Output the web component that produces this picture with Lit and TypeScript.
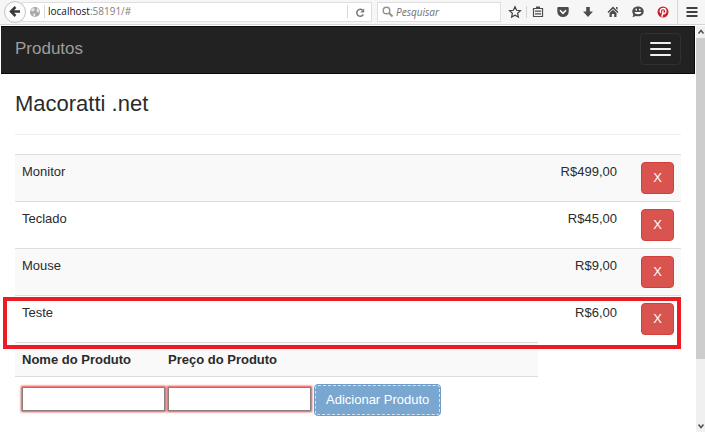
import { LitElement, html, css, svg } from "lit";
import { customElement, state } from "lit/decorators.js";
import { classMap } from "lit/directives/class-map.js";

interface Product {
  name: string;
  price: string;
  marked?: boolean;
}

const icons = {
  back: svg`<path d="M8.500 3 4 7.500 8.500 12M4.500 7.500H13" fill="none" stroke="#3a3a3a" stroke-width="2.500"/>`,
  globe: svg`<circle cx="8" cy="8" r="5" fill="#a6a6a6"/><path d="M3.800 6 6 4l2 1-1 2-2 .500zM6 9l2.500 1L8 12.500 6.500 12zM10 3.800l2.500 2.500-1 2.500-2-1z" fill="#e8e8e8"/>`,
  reload: svg`<path d="M10.800 5.300A3.500 3.500 0 1 0 11.300 9.500" fill="none" stroke="#7a7a7a" stroke-width="1.500"/><path d="M12.200 3.500v4H8.200z" fill="#7a7a7a"/>`,
  search: svg`<circle cx="6.500" cy="6.500" r="3.300" fill="none" stroke="#909090" stroke-width="1.400"/><path d="m9 9 3.500 3.500" stroke="#909090" stroke-width="2"/>`,
  star: svg`<path d="m8 2.800 1.600 3.500 3.800.4-2.800 2.600.8 3.800L8 11.200l-3.400 1.900.8-3.800-2.800-2.600 3.800-.4z" fill="none" stroke="#404040" stroke-width="1.200"/>`,
  list: svg`<path d="M3.500 4.500h9v8h-9z" fill="#f6f6f6" stroke="#4c4c4c" stroke-width="1.200"/><path d="M5 7.200h6M5 9.800h6" stroke="#4c4c4c" stroke-width="1.200"/><path d="M6 2.500h4V5H6z" fill="#4c4c4c"/>`,
  pocket: svg`<path d="M2.300 4a1 1 0 0 1 1-1h9.400a1 1 0 0 1 1 1v3.500a5.700 5.500 0 0 1-11.400 0z" fill="#4c4c4c"/><path d="m5 6.300 3 3 3-3" fill="none" stroke="#fff" stroke-width="1.600"/>`,
  download: svg`<path d="M6.200 3h3.600v4.500H13l-5 5.500-5-5.500h3.200z" fill="#4c4c4c"/>`,
  home: svg`<path d="M8 2.500 13.500 8l-1 1L8 4.800 3.500 9l-1-1zM11 3h1.500v3L11 4.500zM4.500 9 8 5.800 11.500 9v4H9.200v-3H6.800v3H4.500z" fill="#4c4c4c"/>`,
  chat: svg`<path d="M8 2.500c3.500 0 5.700 2.200 5.700 5S11.500 12.300 8 12.300c-.8 0-1.500 0-2.200-.3L2.500 13.200l.8-2.700A4.300 4.300 0 0 1 2.300 7.500C2.300 4.700 4.500 2.500 8 2.500z" fill="#4c4c4c"/><path d="M5.500 4.800H7v1.700H5.500zM9 4.800h1.500v1.700H9zM4.500 8h7c-.5 3-6.500 3-7 0z" fill="#fff"/>`,
  pinterest: svg`<circle cx="8" cy="8" r="5.500" fill="#cb2027"/><path d="M5.800 8.800C4.300 6.300 6 4.500 8.200 4.500c3.600 0 3.200 5.200.8 5.200-.8 0-1.300-.6-1.300-.6M8.200 6.500 6.900 12.800" fill="none" stroke="#fff" stroke-width="1.400"/>`,
  menu: svg`<path d="M2.500 4h11M2.500 8h11M2.500 12h11" stroke="#404040" stroke-width="2"/>`,
  up: svg`<path d="m2.500 6.500 2.500-3 2.500 3" fill="none" stroke="#505050" stroke-width="1.500"/>`,
  down: svg`<path d="m2.500 3.500 2.500 3 2.500-3" fill="none" stroke="#505050" stroke-width="1.500"/>`,
};

const icon = (shape: unknown, box = 16) =>
  html`<svg viewBox="0 0 ${box} ${box}" width=${box} height=${box} aria-hidden="true">${shape}</svg>`;

@customElement("browser-bar")
export class BrowserBar extends LitElement {
  static styles = css`
    :host {
      display: flex;
      align-items: center;
      height: 25px;
      box-sizing: border-box;
      padding: 0 5px 1px 4px;
      background: #f6f6f6;
      border-bottom: 1px solid #d4d4d4;
      font: 10px "Open Sans", "Noto Sans", sans-serif;
    }
    svg { display: block; }
    button {
      display: grid;
      place-items: center;
      padding: 0;
      border: 0;
      background: none;
    }
    .back {
      width: 22px;
      height: 22px;
      border: 1px solid #c4c4c4;
      border-radius: 50%;
      background: #fbfbfb;
      flex: none;
      z-index: 1;
    }
    .address, .search {
      display: flex;
      align-items: center;
      box-sizing: border-box;
      height: 20px;
      border: 1px solid #dedede;
      background: #fff;
    }
    .address {
      flex: 1;
      margin-left: -4px;
      padding-left: 4px;
      color: #808080;
    }
    .url {
      flex: 1;
      margin-left: 1px;
      padding-left: 3px;
      border-left: 1px solid #d8d8d8;
      line-height: 13px;
    }
    .host { color: #111; }
    .reload {
      width: 24px;
      height: 13px;
      border-left: 1px solid #d8d8d8;
    }
    .search {
      width: 124px;
      margin-left: 5px;
      padding-left: 2px;
    }
    .search input {
      flex: 1;
      min-width: 0;
      padding: 0;
      border: 0;
      outline: 0;
      background: none;
      font: italic 10px "Open Sans", "Noto Sans", sans-serif;
    }
    .search input::placeholder { color: #707070; }
    .tools {
      display: flex;
      align-items: center;
      gap: 9px;
      margin-left: 6px;
    }
    .bookmarks {
      display: flex;
      gap: 3px;
      align-items: center;
    }
    .rule {
      width: 1px;
      height: 12px;
      background: #d4d4d4;
    }
    .menu {
      height: 24px;
      margin-left: 6px;
      padding-left: 6px;
      border-left: 1px solid #d8d8d8;
    }
  `;

  render() {
    return html`
      <button class="back" aria-label="Voltar">${icon(icons.back)}</button>
      <div class="address">
        ${icon(icons.globe)}
        <span class="url"><span class="host">localhost</span>:58191/#</span>
        <button class="reload" aria-label="Recarregar">${icon(icons.reload)}</button>
      </div>
      <label class="search">
        ${icon(icons.search)}
        <input type="text" placeholder="Pesquisar" aria-label="Pesquisar" />
      </label>
      <div class="tools">
        <div class="bookmarks">
          <button aria-label="Favoritar">${icon(icons.star)}</button>
          <span class="rule"></span>
          <button aria-label="Favoritos">${icon(icons.list)}</button>
        </div>
        <button aria-label="Pocket">${icon(icons.pocket)}</button>
        <button aria-label="Downloads">${icon(icons.download)}</button>
        <button aria-label="Início">${icon(icons.home)}</button>
        <button aria-label="Conversa">${icon(icons.chat)}</button>
        <button aria-label="Pinterest">${icon(icons.pinterest)}</button>
      </div>
      <button class="menu" aria-label="Menu">${icon(icons.menu)}</button>
    `;
  }
}

@customElement("scroll-rail")
export class ScrollRail extends LitElement {
  static styles = css`
    :host {
      display: flex;
      flex-direction: column;
      width: 9px;
      margin-left: 1px;
      background: #f0f0f0;
    }
    svg { display: block; }
    button {
      height: 12px;
      padding: 0;
      border: 0;
      background: none;
      display: grid;
      place-items: center;
    }
    .track {
      flex: 1;
      display: flex;
      flex-direction: column;
    }
    .thumb {
      flex: 0 0 84%;
      background: #cdcdcd;
    }
  `;

  render() {
    return html`
      <button aria-label="Rolar para cima">${icon(icons.up, 10)}</button>
      <div class="track"><div class="thumb"></div></div>
      <button aria-label="Rolar para baixo">${icon(icons.down, 10)}</button>
    `;
  }
}

@customElement("app-root")
export class AppRoot extends LitElement {
  @state() private products: Product[] = [
    { name: "Monitor", price: "R$499,00" },
    { name: "Teclado", price: "R$45,00" },
    { name: "Mouse", price: "R$9,00" },
    { name: "Teste", price: "R$6,00", marked: true },
  ];

  static styles = css`
    :host {
      display: flex;
      flex-direction: column;
      min-height: 100vh;
      background: #fff;
      color: #2b2b2b;
      font: 13px/20px "Liberation Sans", Arial, sans-serif;
    }
    .view {
      flex: 1;
      display: flex;
      margin-top: 1px;
    }
    .page {
      flex: 1;
      min-width: 0;
      padding-left: 1px;
    }
    .navbar {
      display: flex;
      align-items: center;
      justify-content: space-between;
      box-sizing: border-box;
      height: 48px;
      padding: 0 13px 2px 14px;
      background: #222;
      border: 1px solid #080808;
      border-left: 0;
    }
    .brand {
      color: #9d9d9d;
      font-size: 17px;
      text-decoration: none;
    }
    .toggle {
      display: flex;
      flex-direction: column;
      justify-content: center;
      align-items: center;
      gap: 4px;
      width: 41px;
      height: 32px;
      padding: 0;
      border: 1px solid #303030;
      border-radius: 4px;
      background: none;
    }
    .toggle span {
      width: 21px;
      height: 2px;
      border-radius: 1px;
      background: #f0f0f0;
    }
    main { padding: 0 14px; }
    h1 {
      margin: 0;
      padding: 17px 0;
      font-size: 22px;
      font-weight: 400;
      line-height: 26px;
      border-bottom: 1px solid #eee;
    }
    table {
      border-collapse: separate;
      border-spacing: 0;
    }
    .list {
      width: 100%;
      margin-top: 19px;
    }
    td, th {
      padding: 7px;
      border-top: 1px solid #ddd;
      vertical-align: top;
      text-align: left;
    }
    .list tr:nth-child(odd) td { background: #f9f9f9; }
    .list .price {
      padding-right: 24px;
      text-align: right;
    }
    .list .action {
      width: 33px;
      padding-left: 0;
    }
    .marked { position: relative; }
    .marked::after {
      content: "";
      position: absolute;
      inset: 2px 0 -7px -12px;
      border: 4px solid #ed1c24;
      pointer-events: none;
    }
    .btn {
      display: block;
      box-sizing: border-box;
      height: 32px;
      padding: 0 11px;
      border: 1px solid #d43f3a;
      border-radius: 4px;
      background: #d9534f;
      color: #fff;
      font: inherit;
    }
    .action .btn {
      width: 33px;
      padding: 0;
    }
    .form { width: 523px; max-width: 100%; }
    .form th {
      background: #f9f9f9;
      border-bottom: 1px solid #ddd;
      padding-bottom: 6px;
    }
    .form td { border: 0; padding: 7px 0 7px 3px; }
    .form th { padding-left: 3px; padding-right: 0; }
    .form tr > :first-child { padding-left: 7px; }
    .form .name, .form .cost { width: 143px; }
    .field {
      display: block;
      box-sizing: border-box;
      width: 143px;
      height: 24px;
      margin: 3px 0;
      padding: 1px 3px;
      border: 1px solid #8a7f80;
      outline: 0;
      box-shadow: 0 0 2px 1px #e8403c;
      background: #fff;
      font: inherit;
    }
    .add {
      background: #79a7d0;
      border-color: #6f9cc6;
      outline: 1px dashed #d4e4f2;
      outline-offset: -2px;
    }
  `;

  private remove(product: Product) {
    this.products = this.products.filter((p) => p !== product);
  }

  render() {
    return html`
      <browser-bar></browser-bar>
      <div class="view">
        <div class="page">
          <nav class="navbar">
            <a class="brand" href="#">Produtos</a>
            <button class="toggle" aria-label="Alternar navegação">
              <span></span><span></span><span></span>
            </button>
          </nav>
          <main>
            <h1>Macoratti .net</h1>
            <table class="list">
              <tbody>
                ${this.products.map(
                  (p) => html`
                    <tr class=${classMap({ marked: !!p.marked })}>
                      <td>${p.name}</td>
                      <td class="price">${p.price}</td>
                      <td class="action">
                        <button class="btn" aria-label="Remover ${p.name}" @click=${() => this.remove(p)}>X</button>
                      </td>
                    </tr>
                  `
                )}
              </tbody>
            </table>
            <table class="form">
              <thead>
                <tr>
                  <th class="name"><label for="name">Nome do Produto</label></th>
                  <th class="cost"><label for="cost">Preço do Produto</label></th>
                  <th></th>
                </tr>
              </thead>
              <tbody>
                <tr>
                  <td><input class="field" id="name" type="text" /></td>
                  <td><input class="field" id="cost" type="text" /></td>
                  <td><button class="btn add">Adicionar Produto</button></td>
                </tr>
              </tbody>
            </table>
          </main>
        </div>
        <scroll-rail></scroll-rail>
      </div>
    `;
  }
}
